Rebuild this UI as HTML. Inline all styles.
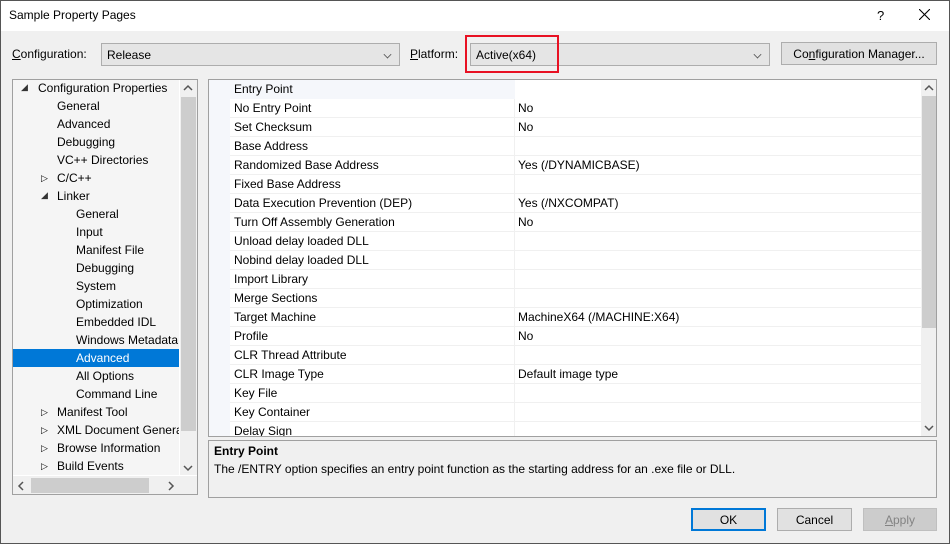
<!DOCTYPE html><html><head><style>
*{box-sizing:border-box;margin:0;padding:0}
body{width:950px;height:544px;font-family:"Segoe UI","Liberation Sans",sans-serif;font-size:12px;color:#000;position:relative;overflow:hidden;background:#f0f0f0}
.a{position:absolute}
.win{left:0;top:0;width:950px;height:544px;border:1px solid #555;background:#f0f0f0}
.title{left:1px;top:1px;width:948px;height:30px;background:#fff}
.combo{background:#e5e5e5;border:1px solid #adadad;height:23px;line-height:21px;padding-left:5px}
.chev{position:absolute;right:8px;top:7px;width:7px;height:7px;border-right:1px solid #555;border-bottom:1px solid #555;transform:rotate(45deg) scale(.8)}
.btn{background:#e1e1e1;border:1px solid #adadad;height:23px;line-height:21px;text-align:center}
.row{position:absolute;left:21px;height:19px;line-height:19px;border-bottom:1px solid #f0f0f0;width:691px}
.row .n{position:absolute;left:4px}
.row .v{position:absolute;left:288px}
.row .sep{position:absolute;left:284px;top:0;width:1px;height:19px;background:#f0f0f0}
.ti{position:absolute;height:18px;line-height:17px;white-space:nowrap}
</style></head><body>
<div class="a win"></div>
<div class="a title"></div>
<div class="a" style="left:9px;top:8px;font-size:12px">Sample Property Pages</div>
<div class="a" style="left:877px;top:8px;font-size:13px">?</div>
<svg class="a" style="left:919px;top:9px" width="11" height="11"><path d="M0 0L11 11M11 0L0 11" stroke="#000" stroke-width="1.1"/></svg>

<div class="a" style="left:12px;top:47px"><u>C</u>onfiguration:</div>
<div class="a combo" style="left:101px;top:43px;width:299px;line-height:22px">Release<span class="chev"></span></div>
<div class="a" style="left:410px;top:47px"><u>P</u>latform:</div>
<div class="a combo" style="left:470px;top:43px;width:300px;line-height:22px">Active(x64)<span class="chev"></span></div>
<div class="a" style="left:465px;top:35px;width:94px;height:38px;border:2px solid #e81123"></div>
<div class="a btn" style="left:781px;top:42px;width:156px;height:23px;line-height:22px">Co<u>n</u>figuration Manager...</div>

<!-- tree -->
<div class="a" style="left:12px;top:79px;width:186px;height:416px;border:1px solid #a0a0a0;background:#fff"></div>
<div class="a" style="left:13px;top:80px;width:166px;height:395px;background:#f5f5f5;overflow:hidden">
<div class="ti" style="left:8px;top:-1px;font-size:9px;color:#333">◢</div>
<div class="ti" style="left:25px;top:0">Configuration Properties</div>
<div class="ti" style="left:44px;top:18px">General</div>
<div class="ti" style="left:44px;top:36px">Advanced</div>
<div class="ti" style="left:44px;top:54px">Debugging</div>
<div class="ti" style="left:44px;top:72px">VC++ Directories</div>
<div class="ti" style="left:28px;top:90px;font-size:9px">▷</div><div class="ti" style="left:44px;top:90px">C/C++</div>
<div class="ti" style="left:28px;top:107px;font-size:9px;color:#333">◢</div><div class="ti" style="left:44px;top:108px">Linker</div>
<div class="ti" style="left:63px;top:126px">General</div>
<div class="ti" style="left:63px;top:144px">Input</div>
<div class="ti" style="left:63px;top:162px">Manifest File</div>
<div class="ti" style="left:63px;top:180px">Debugging</div>
<div class="ti" style="left:63px;top:198px">System</div>
<div class="ti" style="left:63px;top:216px">Optimization</div>
<div class="ti" style="left:63px;top:234px">Embedded IDL</div>
<div class="ti" style="left:63px;top:252px">Windows Metadata</div>
<div class="ti" style="left:0;top:269px;width:166px;background:#0078d7"></div>
<div class="ti" style="left:63px;top:270px;color:#fff">Advanced</div>
<div class="ti" style="left:63px;top:288px">All Options</div>
<div class="ti" style="left:63px;top:306px">Command Line</div>
<div class="ti" style="left:28px;top:324px;font-size:9px">▷</div><div class="ti" style="left:44px;top:324px">Manifest Tool</div>
<div class="ti" style="left:28px;top:342px;font-size:9px">▷</div><div class="ti" style="left:44px;top:342px">XML Document Generator</div>
<div class="ti" style="left:28px;top:360px;font-size:9px">▷</div><div class="ti" style="left:44px;top:360px">Browse Information</div>
<div class="ti" style="left:28px;top:378px;font-size:9px">▷</div><div class="ti" style="left:44px;top:378px">Build Events</div>
</div>
<div class="a" style="left:180px;top:80px;width:17px;height:395px;background:#f0f0f0"></div>
<div class="a" style="left:181px;top:97px;width:15px;height:334px;background:#cdcdcd"></div>
<svg class="a" style="left:183px;top:84px" width="10" height="8"><path d="M1 6L5 2L9 6" stroke="#555" fill="none" stroke-width="1.5"/></svg>
<svg class="a" style="left:183px;top:464px" width="10" height="8"><path d="M1 2L5 6L9 2" stroke="#555" fill="none" stroke-width="1.5"/></svg>
<div class="a" style="left:13px;top:476px;width:184px;height:18px;background:#f0f0f0"></div>
<div class="a" style="left:31px;top:478px;width:118px;height:15px;background:#cdcdcd"></div>
<svg class="a" style="left:17px;top:481px" width="8" height="10"><path d="M6 1L2 5L6 9" stroke="#555" fill="none" stroke-width="1.5"/></svg>
<svg class="a" style="left:167px;top:481px" width="8" height="10"><path d="M2 1L6 5L2 9" stroke="#555" fill="none" stroke-width="1.5"/></svg>

<!-- grid -->
<div class="a" style="left:208px;top:79px;width:729px;height:358px;border:1px solid #a0a0a0;background:#fff;overflow:hidden">
<div class="a" style="left:0;top:0;width:21px;height:356px;background:#f5f7fb"></div>
<div class="a" style="left:0;top:0;width:306px;height:19px;background:#f5f7fb"></div>
<div style="position:absolute;left:0;top:0">
<div class="row" style="top:0;border:0"><span class="n">Entry Point</span></div>
<div class="row" style="top:19px"><span class="n">No Entry Point</span><span class="sep"></span><span class="v">No</span></div>
<div class="row" style="top:38px"><span class="n">Set Checksum</span><span class="sep"></span><span class="v">No</span></div>
<div class="row" style="top:57px"><span class="n">Base Address</span><span class="sep"></span></div>
<div class="row" style="top:76px"><span class="n">Randomized Base Address</span><span class="sep"></span><span class="v">Yes (/DYNAMICBASE)</span></div>
<div class="row" style="top:95px"><span class="n">Fixed Base Address</span><span class="sep"></span></div>
<div class="row" style="top:114px"><span class="n">Data Execution Prevention (DEP)</span><span class="sep"></span><span class="v">Yes (/NXCOMPAT)</span></div>
<div class="row" style="top:133px"><span class="n">Turn Off Assembly Generation</span><span class="sep"></span><span class="v">No</span></div>
<div class="row" style="top:152px"><span class="n">Unload delay loaded DLL</span><span class="sep"></span></div>
<div class="row" style="top:171px"><span class="n">Nobind delay loaded DLL</span><span class="sep"></span></div>
<div class="row" style="top:190px"><span class="n">Import Library</span><span class="sep"></span></div>
<div class="row" style="top:209px"><span class="n">Merge Sections</span><span class="sep"></span></div>
<div class="row" style="top:228px"><span class="n">Target Machine</span><span class="sep"></span><span class="v">MachineX64 (/MACHINE:X64)</span></div>
<div class="row" style="top:247px"><span class="n">Profile</span><span class="sep"></span><span class="v">No</span></div>
<div class="row" style="top:266px"><span class="n">CLR Thread Attribute</span><span class="sep"></span></div>
<div class="row" style="top:285px"><span class="n">CLR Image Type</span><span class="sep"></span><span class="v">Default image type</span></div>
<div class="row" style="top:304px"><span class="n">Key File</span><span class="sep"></span></div>
<div class="row" style="top:323px"><span class="n">Key Container</span><span class="sep"></span></div>
<div class="row" style="top:342px"><span class="n">Delay Sign</span><span class="sep"></span></div>
</div>
<div class="a" style="left:712px;top:0;width:15px;height:356px;background:#f0f0f0"></div>
<div class="a" style="left:713px;top:16px;width:14px;height:232px;background:#cdcdcd"></div>
</div>
<svg class="a" style="left:924px;top:84px" width="10" height="8"><path d="M1 6L5 2L9 6" stroke="#555" fill="none" stroke-width="1.5"/></svg>
<svg class="a" style="left:924px;top:424px" width="10" height="8"><path d="M1 2L5 6L9 2" stroke="#555" fill="none" stroke-width="1.5"/></svg>

<!-- description -->
<div class="a" style="left:208px;top:440px;width:729px;height:58px;border:1px solid #a0a0a0;background:#f0f0f0"></div>
<div class="a" style="left:214px;top:444px;font-weight:bold">Entry Point</div>
<div class="a" style="left:214px;top:462px">The /ENTRY option specifies an entry point function as the starting address for an .exe file or DLL.</div>

<div class="a btn" style="left:691px;top:508px;width:75px;border:2px solid #0078d7;line-height:20px">OK</div>
<div class="a btn" style="left:777px;top:508px;width:75px;line-height:22px">Cancel</div>
<div class="a btn" style="left:863px;top:508px;width:74px;background:#ccc;border-color:#bfbfbf;color:#838383;line-height:22px"><u>A</u>pply</div>
</body></html>
